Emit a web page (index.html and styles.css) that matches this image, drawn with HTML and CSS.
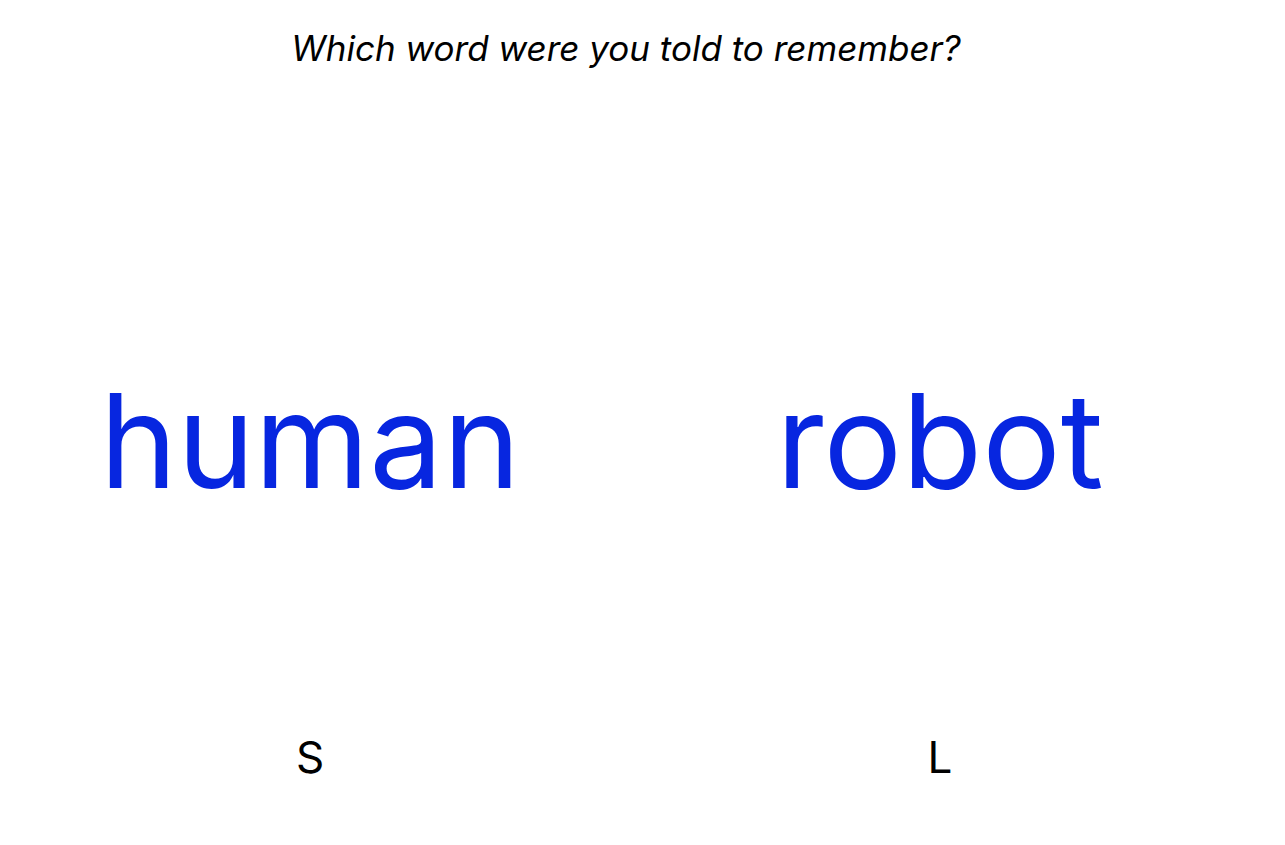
FILE: index.html
```html
<!DOCTYPE html>
<html lang="en">
<head>
<meta charset="utf-8">
<title>Memory check</title>
<link rel="stylesheet" href="styles.css">
</head>
<body>
<main class="page">
  <h1 class="prompt">Which word were you told to remember?</h1>
  <div class="choices">
    <div class="choice">
      <div class="word">human</div>
      <div class="key">S</div>
    </div>
    <div class="choice">
      <div class="word">robot</div>
      <div class="key">L</div>
    </div>
  </div>
</main>
</body>
</html>
```

FILE: styles.css
```css
html, body {
  margin: 0;
  padding: 0;
  background: #ffffff;
}

body {
  font-family: Inter, "Noto Sans", sans-serif;
  color: #000000;
}

.page {
  width: 1252px;
  padding-top: 27px;
}

.prompt {
  margin: 0;
  font-size: 35px;
  line-height: 42px;
  font-weight: 400;
  font-style: italic;
  text-align: center;
}

.choices {
  display: grid;
  grid-template-columns: 620px 640px;
  margin-top: 306px;
}

.choice {
  display: flex;
  flex-direction: column;
  align-items: center;
  gap: 229px;
}

.word {
  font-size: 131px;
  line-height: 131px;
  color: #0726e0;
}

.key {
  font-size: 44px;
  line-height: 44px;
}
```
